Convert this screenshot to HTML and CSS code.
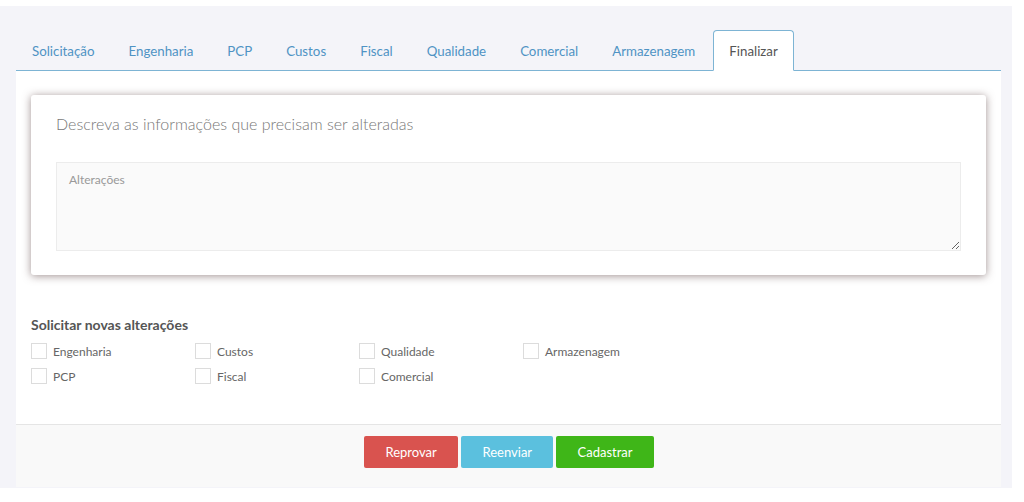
FILE: index.html
```html
<!DOCTYPE html>
<html lang="pt">
<head>
<meta charset="utf-8">
<title>Finalizar</title>
<link rel="stylesheet" href="styles.css">
</head>
<body>
<div class="page">
  <ul class="tabs">
    <li class="tab">Solicitação</li>
    <li class="tab">Engenharia</li>
    <li class="tab">PCP</li>
    <li class="tab">Custos</li>
    <li class="tab">Fiscal</li>
    <li class="tab">Qualidade</li>
    <li class="tab">Comercial</li>
    <li class="tab">Armazenagem</li>
    <li class="tab active">Finalizar</li>
  </ul>
  <div class="content">
    <div class="card">
      <h3 class="card-title">Descreva as informações que precisam ser alteradas</h3>
      <textarea class="field" placeholder="Alterações"></textarea>
    </div>
    <h4 class="section-title">Solicitar novas alterações</h4>
    <div class="checks">
      <label class="check"><span class="box"></span>Engenharia</label>
      <label class="check"><span class="box"></span>Custos</label>
      <label class="check"><span class="box"></span>Qualidade</label>
      <label class="check"><span class="box"></span>Armazenagem</label>
      <label class="check"><span class="box"></span>PCP</label>
      <label class="check"><span class="box"></span>Fiscal</label>
      <label class="check"><span class="box"></span>Comercial</label>
    </div>
  </div>
  <div class="footer">
    <button class="btn btn-red">Reprovar</button>
    <button class="btn btn-blue">Reenviar</button>
    <button class="btn btn-green">Cadastrar</button>
  </div>
</div>
</body>
</html>
```

FILE: styles.css
```css
* { box-sizing: border-box; }
html, body { margin: 0; padding: 0; background: #ffffff; }
body { font-family: "Lato", "Open Sans", sans-serif; font-size: 13px; color: #555; }

.page {
  margin-top: 6px;
  width: 1012px;
  height: 482px;
  background: #f4f4f9;
  padding: 24px 11px 0 16px;
}

.tabs {
  list-style: none;
  margin: 0;
  padding: 0;
  display: flex;
  border-bottom: 1px solid #7db4d4;
  height: 41px;
}
.tab {
  padding: 10px 15px;
  margin-right: 2px;
  line-height: 20px;
  height: 40px;
  font-size: 13.3px;
  color: #4f93c4;
  border: 1px solid transparent;
  border-radius: 4px 4px 0 0;
}
.tab.active {
  color: #555;
  background: #ffffff;
  border-color: #7db4d4;
  border-bottom-color: #ffffff;
  height: 41px;
}

.content {
  background: #ffffff;
  height: 353px;
  padding: 24px 15px 0;
}

.card {
  width: 955px;
  background: #ffffff;
  border-radius: 3px;
  box-shadow: 0 1px 8px rgba(80, 55, 55, 0.55);
  padding: 18px 25px 24px;
}
.card-title {
  margin: 0 0 27px;
  font-weight: 300;
  font-size: 16px;
  line-height: 22px;
  color: #777;
}
.field {
  display: block;
  width: 905px;
  height: 89px;
  margin: 0;
  padding: 9px 12px;
  background: #fafafa;
  border: 1px solid #ececec;
  font-family: inherit;
  font-size: 12px;
  color: #555;
  resize: vertical;
  outline: none;
}
.field::placeholder { color: #999; }

.section-title {
  margin: 40px 0 8px;
  font-size: 14px;
  line-height: 20px;
  font-weight: 700;
  color: #555;
}
.checks {
  display: grid;
  grid-template-columns: repeat(4, 164px);
  row-gap: 9px;
}
.check {
  display: flex;
  align-items: center;
  gap: 6px;
  height: 16px;
  font-size: 12px;
  color: #666;
}
.box {
  width: 16px;
  height: 16px;
  border: 1px solid #dcdcdc;
  background: #fff;
  flex: none;
}

.footer {
  height: 63px;
  background: #f9f9f9;
  border-top: 1px solid #e5e5e5;
  display: flex;
  justify-content: center;
  align-items: flex-start;
  gap: 3px;
  padding-top: 11px;
}
.btn {
  height: 32px;
  border: none;
  border-radius: 2px;
  color: #ffffff;
  font-family: inherit;
  font-size: 13px;
  padding: 0 22px;
}
.btn-red { background: #d9534f; width: 94px; }
.btn-blue { background: #5bc0de; width: 92px; }
.btn-green { background: #3fb618; width: 98px; }
```
